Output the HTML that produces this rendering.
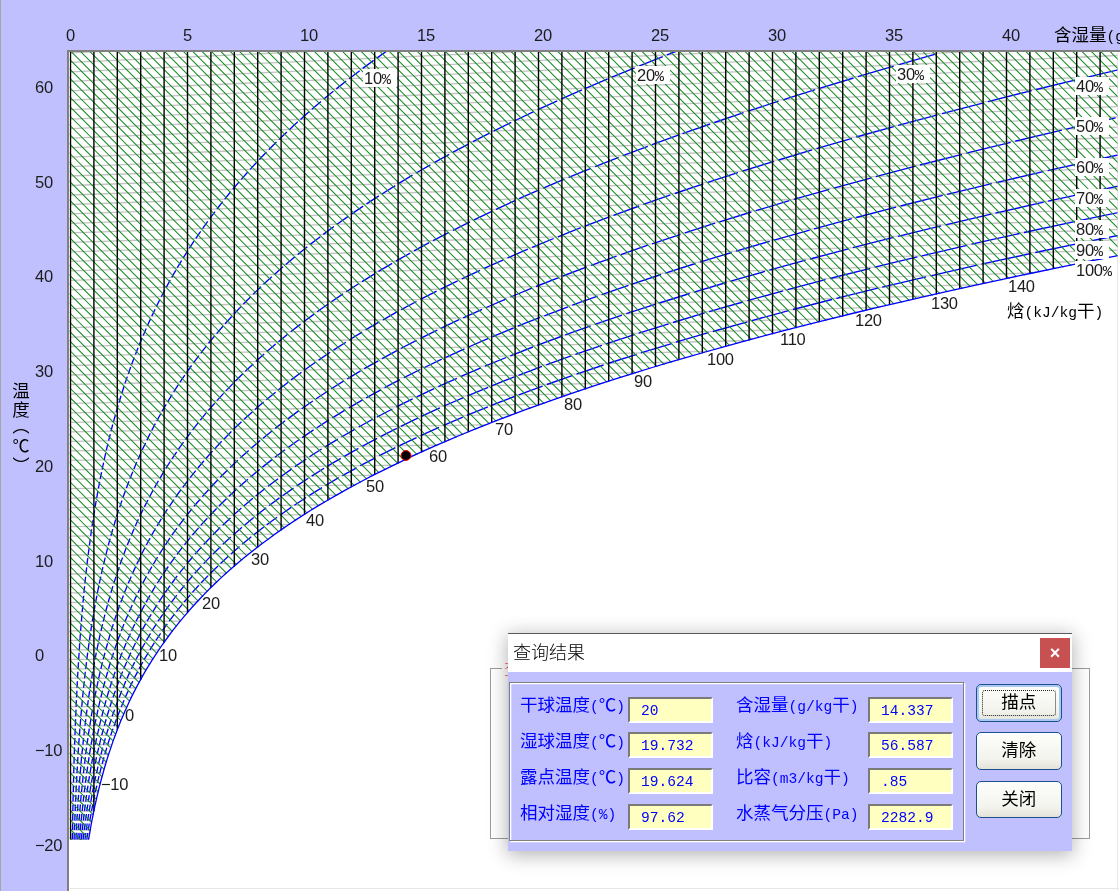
<!DOCTYPE html>
<html lang="zh-CN">
<head>
<meta charset="utf-8">
<title>焓湿图 - 查询结果</title>
<style>
*{box-sizing:border-box;margin:0;padding:0}
html,body{width:1120px;height:891px;overflow:hidden}
body{background:#c0c0ff;position:relative;font-family:"Liberation Sans","Noto Sans CJK SC",sans-serif;color:#000}
#edge{position:absolute;left:0;top:0;width:1.1px;height:891px;background:#a6a6a6}
#plot{position:absolute;left:67.2px;top:49.8px;width:1052.8px;height:841.2px;background:#fff;border-left:2.5px solid #808080;border-top:2px solid #808080}
#plotr{position:absolute;left:1117.2px;top:52px;width:1.3px;height:837.5px;background:#e6e6e6}
#plotb{position:absolute;left:70px;top:888.2px;width:1048.5px;height:1.3px;background:#e6e6e6}
.n{position:absolute;font:16.5px/19px "Liberation Sans",sans-serif;white-space:nowrap;letter-spacing:-0.3px;color:#1c1c1c}
.w{background:#fff;padding:0 0 0 1px;line-height:18px;height:18px}
.p{font-family:"Liberation Mono",monospace;font-size:15.5px;letter-spacing:-0.5px}
.c{position:absolute;font:400 17.5px/20px "Liberation Sans","Noto Sans CJK SC",sans-serif;white-space:nowrap}
.l{font-family:"Liberation Mono",monospace;font-size:14.6px}

#gb{position:absolute;left:490px;top:668px;width:600.3px;height:171px;border:1.5px solid #9c9c9c;background:#fff}
#gbt{position:absolute;left:502px;top:659px;font:17.5px/20px "Liberation Serif","Noto Serif CJK SC",serif;color:#f00;background:#fff;padding:0 2px;white-space:nowrap}
#dlg{position:absolute;left:508px;top:633px;width:563.8px;height:217.7px;background:#c0c0ff;box-shadow:0 3px 18px 1px rgba(0,0,0,.3)}
#tb{position:absolute;left:0;top:0;width:563.8px;height:39px;background:#fff;border-top:1px solid #5a5a5a}
#tt{position:absolute;left:5px;top:6.8px;font:300 18px/24px "Liberation Sans","Noto Sans CJK SC",sans-serif;color:#000;white-space:nowrap}
#cx{position:absolute;left:532px;top:4px;width:30px;height:30px;background:#c75050;color:#fff;font:bold 18px/31px "Liberation Sans",sans-serif;text-align:center}
#pn{position:absolute;left:1px;top:48.5px;width:455px;height:159px;border:1.3px solid #808080;box-shadow:inset 1.3px 1.3px 0 #fff,1.3px 1.3px 0 #fff}
.fl{position:absolute;font:17.5px/20px "Liberation Sans","Noto Sans CJK SC",sans-serif;color:#0000ff;white-space:nowrap}
.fl .l{font-family:"Liberation Mono",monospace;font-size:14.6px}
.fv{position:absolute;width:85px;height:26px;background:#ffffc0;border:2px solid;border-color:#7a7a7a #fff #fff #7a7a7a;font:14.6px/24px "Liberation Mono",monospace;color:#0000ff;padding-left:11px;white-space:nowrap}
.bt{position:absolute;left:468px;width:85.5px;height:37.5px;border:1.3px solid #1c4f8c;border-radius:5px;background:linear-gradient(#fdfdfb,#f4f4ee 70%,#e4e3da);font:17.5px/34px "Liberation Sans","Noto Sans CJK SC",sans-serif;color:#000;text-align:center}
.bt.f{box-shadow:inset 0 0 0 2px #a9c8f2}
.bt.f i{position:absolute;left:4.5px;top:4.5px;right:4.5px;bottom:4.5px;border:1.3px dotted #222;border-radius:3px}
body>*{will-change:transform}
</style>
</head>
<body>
<div id="edge"></div>
<div id="plot"></div>
<div id="plotr"></div>
<div id="plotb"></div>
<svg width="1120" height="891" viewBox="0 0 1120 891" style="position:absolute;left:0;top:0">
<defs><clipPath id="reg"><path d="M69.5 840 L88.6 840.3 L89.4 835.5 L90.2 830.8 L91 826.1 L91.9 821.3 L92.9 816.6 L93.8 811.9 L94.8 807.1 L95.9 802.4 L96.9 797.7 L98.1 792.9 L99.2 788.2 L100.4 783.5 L101.7 778.7 L103 774 L104.3 769.2 L105.7 764.5 L107.1 759.8 L108.6 755 L110.2 750.3 L111.8 745.6 L113.4 740.8 L115.2 736.1 L117 731.3 L118.8 726.6 L120.7 721.8 L122.7 717.1 L124.8 712.3 L126.9 707.6 L129.1 702.8 L131.3 698.1 L133.7 693.3 L136.1 688.6 L138.7 683.8 L141.3 679.1 L143.9 674.3 L146.7 669.6 L149.6 664.8 L152.6 660 L155.7 655.3 L158.8 650.5 L162.1 645.7 L165.5 641 L169 636.2 L172.6 631.4 L176.4 626.6 L180.2 621.8 L184.2 617 L188.3 612.3 L192.5 607.5 L196.9 602.7 L201.4 597.9 L206.1 593.1 L210.9 588.2 L215.9 583.4 L221 578.6 L226.3 573.8 L231.7 569 L237.3 564.1 L243.1 559.3 L249.1 554.4 L255.2 549.6 L261.5 544.7 L268.1 539.9 L274.8 535 L281.7 530.1 L288.9 525.2 L296.2 520.3 L303.8 515.4 L311.6 510.5 L319.7 505.6 L328 500.7 L336.5 495.8 L345.3 490.8 L354.3 485.9 L363.6 480.9 L373.2 475.9 L383.1 471 L393.2 466 L403.6 461 L414.4 455.9 L425.5 450.9 L436.8 445.9 L448.5 440.8 L460.6 435.7 L473 430.6 L485.7 425.5 L498.8 420.4 L512.3 415.3 L526.2 410.1 L540.4 405 L555.1 399.8 L570.2 394.6 L585.7 389.4 L601.6 384.1 L618 378.8 L634.9 373.6 L652.2 368.2 L670 362.9 L688.3 357.6 L707.1 352.2 L726.4 346.8 L746.3 341.3 L766.7 335.9 L787.7 330.4 L809.3 324.9 L831.5 319.3 L854.2 313.7 L877.7 308.1 L901.7 302.5 L926.4 296.8 L951.9 291.1 L978 285.3 L1004.8 279.5 L1032.4 273.7 L1060.7 267.8 L1089.8 261.9 L1119.7 255.9 L1150.4 249.9 L1157.5 52 L1117.5 52 L69.5 52 Z"/></clipPath><clipPath id="box"><rect x="69.5" y="52" width="1048" height="788.3"/></clipPath></defs>
<g clip-path="url(#box)">
<g clip-path="url(#reg)" fill="none">
<path d="M70.5 839.3 L1117.5 854.7 M70.5 829.8 L1117.5 844.5 M70.5 820.3 L1117.5 834.2 M70.5 810.9 L1117.5 824 M70.5 801.4 L1117.5 813.7 M70.5 791.9 L1117.5 803.5 M70.5 782.4 L1117.5 793.3 M70.5 773 L1117.5 783 M70.5 763.5 L1117.5 772.8 M70.5 754 L1117.5 762.5 M70.5 744.5 L1117.5 752.3 M70.5 735.1 L1117.5 742 M70.5 725.6 L1117.5 731.8 M70.5 716.1 L1117.5 721.5 M70.5 706.6 L1117.5 711.3 M70.5 697.2 L1117.5 701 M70.5 687.7 L1117.5 690.8 M70.5 678.2 L1117.5 680.5 M70.5 668.8 L1117.5 670.3 M70.5 659.3 L1117.5 660 M70.5 649.8 L1117.5 649.8 M70.5 640.3 L1117.5 639.6 M70.5 630.8 L1117.5 629.3 M70.5 621.4 L1117.5 619.1 M70.5 611.9 L1117.5 608.8 M70.5 602.4 L1117.5 598.6 M70.5 592.9 L1117.5 588.3 M70.5 583.5 L1117.5 578.1 M70.5 574 L1117.5 567.8 M70.5 564.5 L1117.5 557.6 M70.5 555 L1117.5 547.3 M70.5 545.6 L1117.5 537.1 M70.5 536.1 L1117.5 526.8 M70.5 526.6 L1117.5 516.6 M70.5 517.1 L1117.5 506.3 M70.5 507.7 L1117.5 496.1 M70.5 498.2 L1117.5 485.9 M70.5 488.7 L1117.5 475.6 M70.5 479.2 L1117.5 465.4 M70.5 469.8 L1117.5 455.1 M70.5 460.3 L1117.5 444.9 M70.5 450.8 L1117.5 434.6 M70.5 441.3 L1117.5 424.4 M70.5 431.9 L1117.5 414.1 M70.5 422.4 L1117.5 403.9 M70.5 412.9 L1117.5 393.6 M70.5 403.4 L1117.5 383.4 M70.5 394 L1117.5 373.1 M70.5 384.5 L1117.5 362.9 M70.5 375 L1117.5 352.6 M70.5 365.5 L1117.5 342.4 M70.5 356.1 L1117.5 332.2 M70.5 346.6 L1117.5 321.9 M70.5 337.1 L1117.5 311.7 M70.5 327.6 L1117.5 301.4 M70.5 318.2 L1117.5 291.2 M70.5 308.7 L1117.5 280.9 M70.5 299.2 L1117.5 270.7 M70.5 289.8 L1117.5 260.4 M70.5 280.3 L1117.5 250.2 M70.5 270.8 L1117.5 239.9 M70.5 261.3 L1117.5 229.7 M70.5 251.9 L1117.5 219.4 M70.5 242.4 L1117.5 209.2 M70.5 232.9 L1117.5 199 M70.5 223.4 L1117.5 188.7 M70.5 213.9 L1117.5 178.5 M70.5 204.5 L1117.5 168.2 M70.5 195 L1117.5 158 M70.5 185.5 L1117.5 147.7 M70.5 176 L1117.5 137.5 M70.5 166.6 L1117.5 127.2 M70.5 157.1 L1117.5 117 M70.5 147.6 L1117.5 106.7 M70.5 138.1 L1117.5 96.5 M70.5 128.7 L1117.5 86.2 M70.5 119.2 L1117.5 76 M70.5 109.7 L1117.5 65.7 M70.5 100.2 L1117.5 55.5 M70.5 90.8 L1117.5 45.3 M70.5 81.3 L1117.5 35 M70.5 71.8 L1117.5 24.8 M70.5 62.4 L1117.5 14.5 M70.5 52.9 L1117.5 4.3 M70.5 43.4 L1117.5 -6 M70.5 33.9 L1117.5 -16.2" stroke="#c2c2c2" stroke-width="1.3"/>
<path d="M72.3 839.3 L72.4 832.8 M72.5 829.9 L72.6 823.3 M72.6 820.4 L72.8 813.8 M72.8 810.9 L73 804.4 M73 801.4 L73.2 794.9 M73.3 792 L73.4 785.4 M73.5 782.5 L73.7 775.9 M73.7 773 L73.9 766.5 M74 763.5 L74.2 757 M74.3 754.1 L74.5 747.5 M74.6 744.6 L74.9 738 M75 735.1 L75.2 728.6 M75.3 725.6 L75.6 719.1 M75.7 716.2 L76 709.6 M76.1 706.7 L76.4 700.1 M76.6 697.2 L76.9 690.7 M77 687.7 L77.4 681.2 M77.5 678.2 L77.9 671.7 M78.1 668.8 L78.5 662.2 M78.7 659.3 L79.1 652.7 M79.3 649.8 L79.7 643.3 M79.9 640.3 L80.4 633.8 M80.6 630.8 L81.2 624.3 M81.4 621.4 L81.9 614.8 M82.2 611.9 L82.8 605.3 M83 602.4 L83.7 595.8 M83.9 592.9 L84.6 586.3 M84.9 583.4 L85.6 576.8 M85.9 573.9 L86.7 567.3 M87 564.4 L87.8 557.8 M88.2 554.9 L89 548.3 M89.4 545.4 L90.3 538.8 M90.7 535.9 L91.6 529.3 M92 526.4 L93.1 519.8 M93.5 516.9 L94.6 510.3 M95 507.4 L96.2 500.8 M96.7 497.9 L97.9 491.3 M98.4 488.4 L99.7 481.8 M100.2 478.9 L101.6 472.2 M102.1 469.3 L103.6 462.7 M104.2 459.8 L105.7 453.2 M106.3 450.3 L107.9 443.6 M108.6 440.7 L110.3 434.1 M111 431.2 L112.7 424.5 M113.5 421.6 L115.4 415 M116.2 412.1 L118.1 405.4 M119 402.5 L121 395.8 M121.9 393 L124.1 386.2 M125 383.4 L127.3 376.6 M128.3 373.8 L130.7 367 M131.7 364.2 L134.3 357.4 M135.4 354.6 L138.1 347.8 M139.2 345 L142 338.2 M143.2 335.4 L146.2 328.5 M147.4 325.7 L150.5 318.9 M151.8 316.1 L155.1 309.2 M156.4 306.4 L159.9 299.5 M161.3 296.7 L164.9 289.8 M166.4 287.1 L170.2 280.1 M171.7 277.4 L175.8 270.4 M177.3 267.7 L181.6 260.6 M183.2 257.9 L187.7 250.9 M189.4 248.2 L194 241.1 M195.8 238.4 L200.7 231.3 M202.6 228.6 L207.7 221.4 M209.6 218.8 L215 211.6 M217 209 L222.7 201.7 M224.7 199.1 L230.7 191.8 M232.8 189.3 L239.1 181.9 M241.3 179.4 L247.8 172 M250.1 169.4 L257 162 M259.3 159.5 L266.5 152 M268.9 149.5 L276.5 142 M279 139.5 L286.9 131.9 M289.5 129.4 L297.8 121.8 M300.5 119.4 L309.2 111.6 M311.9 109.2 L321 101.5 M323.8 99.1 L333.4 91.3 M336.3 88.9 L346.2 81 M349.2 78.7 L359.7 70.7 M362.7 68.4 L373.7 60.4 M376.8 58.1 L388.3 50 M74.1 839.4 L74.3 832.8 M74.4 829.9 L74.7 823.3 M74.8 820.4 L75 813.9 M75.2 810.9 L75.4 804.4 M75.6 801.5 L75.9 794.9 M76 792 L76.3 785.4 M76.5 782.5 L76.8 776 M77 773 L77.4 766.5 M77.5 763.6 L77.9 757 M78.1 754.1 L78.5 747.5 M78.7 744.6 L79.2 738.1 M79.4 735.1 L79.9 728.6 M80.1 725.7 L80.7 719.1 M80.9 716.2 L81.5 709.6 M81.7 706.7 L82.4 700.1 M82.6 697.2 L83.3 690.7 M83.6 687.7 L84.3 681.2 M84.6 678.3 L85.3 671.7 M85.7 668.8 L86.5 662.2 M86.8 659.3 L87.7 652.7 M88.1 649.8 L89 643.2 M89.4 640.3 L90.4 633.7 M90.8 630.8 L91.8 624.2 M92.3 621.3 L93.4 614.7 M93.9 611.8 L95.1 605.2 M95.6 602.3 L96.9 595.7 M97.4 592.8 L98.8 586.2 M99.3 583.3 L100.8 576.7 M101.4 573.8 L102.9 567.2 M103.6 564.3 L105.2 557.7 M105.9 554.8 L107.6 548.2 M108.3 545.3 L110.1 538.6 M110.9 535.7 L112.8 529.1 M113.7 526.2 L115.7 519.5 M116.6 516.7 L118.7 510 M119.7 507.1 L122 500.4 M122.9 497.6 L125.4 490.9 M126.4 488 L129 481.3 M130 478.5 L132.8 471.7 M133.9 468.9 L136.8 462.1 M138 459.3 L141.1 452.5 M142.3 449.7 L145.6 442.9 M146.9 440.1 L150.3 433.3 M151.7 430.5 L155.3 423.6 M156.8 420.9 L160.6 414 M162.1 411.2 L166.2 404.3 M167.8 401.6 L172.1 394.6 M173.7 391.9 L178.2 384.9 M180 382.2 L184.8 375.2 M186.6 372.5 L191.6 365.5 M193.5 362.8 L198.9 355.7 M200.8 353.1 L206.5 345.9 M208.5 343.3 L214.5 336.1 M216.6 333.6 L222.9 326.3 M225.1 323.8 L231.7 316.5 M234 314 L241 306.6 M243.4 304.1 L250.8 296.7 M253.2 294.2 L261 286.8 M263.5 284.3 L271.8 276.8 M274.4 274.4 L283 266.8 M285.8 264.5 L294.9 256.8 M297.7 254.5 L307.3 246.8 M310.2 244.4 L320.3 236.7 M323.3 234.4 L333.9 226.5 M337 224.3 L348.2 216.4 M351.4 214.1 L363.2 206.1 M366.5 203.9 L378.9 195.9 M382.3 193.7 L395.3 185.6 M398.8 183.4 L412.5 175.2 M416.1 173 L430.4 164.8 M434.2 162.7 L449.2 154.3 M453.1 152.2 L468.9 143.8 M472.9 141.7 L489.6 133.1 M493.6 131.1 L511.2 122.4 M515.2 120.5 L533.7 111.7 M537.8 109.7 L557.3 100.8 M561.4 98.9 L582 89.9 M586.1 88.1 L607.7 78.9 M611.9 77.1 L634.7 67.8 M638.8 66.1 L662.8 56.6 M666.9 54.9 L692.1 45.3 M75.9 839.4 L76.3 832.8 M76.4 829.9 L76.8 823.4 M76.9 820.4 L77.3 813.9 M77.5 811 L77.9 804.4 M78.1 801.5 L78.6 794.9 M78.8 792 L79.2 785.5 M79.5 782.5 L80 776 M80.2 773.1 L80.8 766.5 M81 763.6 L81.6 757 M81.9 754.1 L82.6 747.6 M82.9 744.6 L83.6 738.1 M83.9 735.2 L84.6 728.6 M85 725.7 L85.8 719.1 M86.1 716.2 L87 709.6 M87.4 706.7 L88.3 700.2 M88.7 697.2 L89.7 690.7 M90.1 687.8 L91.2 681.2 M91.7 678.3 L92.8 671.7 M93.3 668.8 L94.5 662.2 M95 659.3 L96.3 652.7 M96.9 649.8 L98.3 643.2 M98.9 640.3 L100.3 633.7 M101 630.8 L102.6 624.2 M103.2 621.3 L104.9 614.7 M105.6 611.8 L107.4 605.2 M108.2 602.3 L110.1 595.6 M110.9 592.8 L112.9 586.1 M113.8 583.3 L116 576.6 M116.9 573.7 L119.2 567 M120.1 564.2 L122.6 557.5 M123.6 554.7 L126.2 547.9 M127.3 545.1 L130 538.4 M131.2 535.6 L134.1 528.8 M135.3 526 L138.4 519.2 M139.7 516.4 L143 509.6 M144.4 506.9 L147.9 500 M149.3 497.3 L153 490.4 M154.5 487.7 L158.4 480.8 M160 478.1 L164.2 471.1 M165.8 468.4 L170.3 461.5 M172 458.8 L176.7 451.8 M178.5 449.2 L183.5 442.1 M185.4 439.5 L190.7 432.4 M192.6 429.8 L198.3 422.7 M200.3 420.1 L206.2 412.9 M208.4 410.4 L214.7 403.2 M216.9 400.6 L223.6 393.4 M225.9 390.9 L232.9 383.6 M235.3 381.1 L242.8 373.7 M245.3 371.3 L253.2 363.9 M255.8 361.5 L264.2 354 M266.9 351.6 L275.7 344 M278.5 341.7 L287.9 334.1 M290.7 331.8 L300.6 324.1 M303.6 321.8 L314.1 314.1 M317.1 311.8 L328.2 304 M331.4 301.8 L343 293.9 M346.3 291.7 L358.6 283.8 M362 281.6 L375 273.6 M378.5 271.4 L392.2 263.4 M395.8 261.2 L410.2 253.1 M414 250.9 L429.1 242.7 M433 240.6 L449 232.3 M453 230.3 L470 221.8 M474 219.8 L491.9 211.3 M496 209.3 L515 200.6 M519.1 198.7 L539.1 189.9 M543.2 188.1 L564.4 179.1 M568.6 177.4 L590.9 168.3 M595.1 166.6 L618.7 157.3 M622.9 155.7 L647.8 146.3 M652 144.7 L678.3 135.2 M682.5 133.6 L710.2 124 M714.4 122.5 L743.6 112.6 M747.9 111.2 L778.6 101.2 M782.9 99.8 L815.2 89.6 M819.5 88.3 L853.5 78 M857.9 76.7 L893.7 66.1 M898 64.9 L935.6 54.2 M77.7 839.4 L78.2 832.9 M78.4 829.9 L78.9 823.4 M79.1 820.5 L79.6 813.9 M79.8 811 L80.4 804.4 M80.6 801.5 L81.2 795 M81.5 792 L82.2 785.5 M82.5 782.6 L83.2 776 M83.5 773.1 L84.2 766.5 M84.6 763.6 L85.4 757.1 M85.7 754.1 L86.6 747.6 M87 744.7 L87.9 738.1 M88.3 735.2 L89.3 728.6 M89.8 725.7 L90.9 719.1 M91.3 716.2 L92.5 709.7 M93 706.7 L94.2 700.2 M94.8 697.3 L96.1 690.7 M96.7 687.8 L98.1 681.2 M98.7 678.3 L100.2 671.7 M100.9 668.8 L102.5 662.2 M103.2 659.3 L105 652.7 M105.7 649.8 L107.6 643.2 M108.4 640.3 L110.3 633.7 M111.2 630.8 L113.3 624.1 M114.2 621.3 L116.4 614.6 M117.4 611.8 L119.8 605.1 M120.8 602.2 L123.4 595.5 M124.4 592.7 L127.2 586 M128.3 583.2 L131.2 576.4 M132.4 573.6 L135.5 566.9 M136.8 564.1 L140.1 557.3 M141.4 554.5 L144.9 547.7 M146.3 545 L150.1 538.1 M151.5 535.4 L155.5 528.5 M157.1 525.8 L161.3 518.9 M162.9 516.2 L167.4 509.2 M169.2 506.6 L173.9 499.6 M175.7 497 L180.8 489.9 M182.7 487.3 L188.1 480.3 M190.1 477.7 L195.8 470.6 M197.9 468 L204 460.8 M206.1 458.3 L212.6 451.1 M214.9 448.6 L221.7 441.3 M224.1 438.9 L231.4 431.6 M233.8 429.1 L241.5 421.7 M244.1 419.3 L252.3 411.9 M254.9 409.5 L263.6 402.1 M266.3 399.7 L275.6 392.2 M278.4 389.8 L288.2 382.2 M291.1 379.9 L301.5 372.3 M304.5 370 L315.5 362.3 M318.6 360.1 L330.2 352.3 M333.5 350.1 L345.8 342.2 M349.1 340 L362.1 332.1 M365.6 329.9 L379.3 321.9 M383 319.8 L397.4 311.7 M401.2 309.6 L416.5 301.5 M420.4 299.4 L436.6 291.2 M440.6 289.1 L457.7 280.8 M461.8 278.8 L480 270.3 M484.1 268.4 L503.4 259.8 M507.5 257.9 L527.9 249.2 M532.1 247.4 L553.7 238.5 M557.9 236.8 L580.8 227.7 M585 226.1 L609.3 216.9 M613.5 215.3 L639.2 206 M643.4 204.4 L670.5 194.9 M674.8 193.5 L703.4 183.8 M707.7 182.4 L737.9 172.6 M742.2 171.2 L774.2 161.3 M778.5 160 L812.2 149.9 M816.5 148.6 L852 138.3 M856.3 137 L893.8 126.6 M898.1 125.4 L937.6 114.8 M942 113.6 L983.6 102.8 M987.9 101.6 L1031.7 90.6 M1036.1 89.5 L1082.2 78.3 M1086.6 77.3 L1135.2 65.8 M79.5 839.4 L80.1 832.9 M80.3 830 L80.9 823.4 M81.2 820.5 L81.9 813.9 M82.2 811 L82.9 804.5 M83.2 801.5 L83.9 795 M84.3 792.1 L85.1 785.5 M85.4 782.6 L86.3 776.1 M86.7 773.1 L87.7 766.6 M88.1 763.7 L89.1 757.1 M89.5 754.2 L90.6 747.6 M91.1 744.7 L92.3 738.1 M92.8 735.2 L94.1 728.6 M94.6 725.7 L96 719.2 M96.6 716.3 L98 709.7 M98.6 706.8 L100.2 700.2 M100.9 697.3 L102.5 690.7 M103.2 687.8 L105 681.2 M105.8 678.3 L107.7 671.7 M108.5 668.8 L110.5 662.2 M111.4 659.3 L113.6 652.7 M114.5 649.8 L116.9 643.1 M117.8 640.3 L120.3 633.6 M121.4 630.8 L124 624.1 M125.1 621.3 L128 614.5 M129.2 611.7 L132.2 605 M133.4 602.2 L136.7 595.4 M138 592.7 L141.4 585.9 M142.8 583.1 L146.5 576.3 M148 573.5 L151.9 566.7 M153.4 564 L157.6 557.1 M159.2 554.4 L163.7 547.5 M165.4 544.8 L170.1 537.8 M171.9 535.2 L177 528.2 M178.9 525.6 L184.3 518.5 M186.2 516 L192 508.9 M194 506.3 L200.1 499.2 M202.3 496.6 L208.8 489.5 M211 487 L217.9 479.7 M220.3 477.3 L227.6 470 M230.1 467.5 L237.9 460.2 M240.4 457.8 L248.7 450.4 M251.4 448 L260.2 440.6 M263 438.2 L272.3 430.7 M275.2 428.4 L285.1 420.8 M288.1 418.6 L298.6 410.9 M301.7 408.7 L312.9 401 M316.1 398.7 L328 391 M331.3 388.8 L343.9 380.9 M347.3 378.8 L360.6 370.9 M364.2 368.7 L378.3 360.8 M382 358.7 L396.9 350.6 M400.7 348.5 L416.5 340.4 M420.5 338.3 L437.3 330.1 M441.3 328.1 L459.1 319.7 M463.2 317.8 L482.1 309.3 M486.2 307.5 L506.4 298.8 M510.5 297 L531.9 288.2 M536 286.5 L558.7 277.6 M562.9 276 L586.9 266.9 M591.1 265.3 L616.6 256.1 M620.8 254.6 L647.8 245.2 M652.1 243.8 L680.6 234.3 M684.9 232.8 L715.1 223.2 M719.4 221.8 L751.4 212 M755.7 210.7 L789.4 200.7 M793.7 199.4 L829.4 189.3 M833.8 188.1 L871.5 177.8 M875.8 176.6 L915.6 166.1 M920 165 L962 154.3 M966.3 153.2 L1010.7 142.3 M1015.1 141.2 L1061.8 130.2 M1066.2 129.2 L1115.6 117.9 M81.3 839.5 L82 832.9 M82.3 830 L83 823.4 M83.4 820.5 L84.1 814 M84.5 811.1 L85.3 804.5 M85.7 801.6 L86.6 795 M87 792.1 L88 785.6 M88.4 782.6 L89.5 776.1 M90 773.2 L91.1 766.6 M91.6 763.7 L92.8 757.1 M93.4 754.2 L94.7 747.6 M95.2 744.7 L96.6 738.2 M97.3 735.3 L98.8 728.7 M99.4 725.8 L101.1 719.2 M101.8 716.3 L103.5 709.7 M104.3 706.8 L106.1 700.2 M106.9 697.3 L108.9 690.7 M109.8 687.8 L112 681.2 M112.9 678.3 L115.2 671.7 M116.1 668.8 L118.6 662.1 M119.6 659.3 L122.3 652.6 M123.4 649.8 L126.2 643.1 M127.4 640.3 L130.4 633.5 M131.6 630.8 L134.8 624 M136.1 621.2 L139.6 614.4 M141 611.7 L144.6 604.9 M146.1 602.1 L150 595.3 M151.6 592.6 L155.7 585.7 M157.4 583 L161.8 576.1 M163.6 573.5 L168.3 566.5 M170.1 563.9 L175.2 556.9 M177.1 554.3 L182.5 547.2 M184.5 544.7 L190.3 537.6 M192.4 535 L198.6 527.9 M200.7 525.4 L207.3 518.2 M209.6 515.7 L216.6 508.5 M219 506 L226.4 498.8 M228.9 496.3 L236.9 489 M239.5 486.6 L247.9 479.2 M250.6 476.9 L259.6 469.4 M262.4 467.1 L272 459.6 M274.9 457.3 L285.1 449.7 M288.1 447.5 L298.9 439.8 M302.1 437.6 L313.6 429.9 M316.8 427.7 L329 419.9 M332.4 417.8 L345.4 409.9 M348.9 407.8 L362.6 399.9 M366.2 397.8 L380.8 389.8 M384.6 387.7 L400 379.7 M403.9 377.6 L420.3 369.5 M424.4 367.5 L441.8 359.2 M445.9 357.3 L464.5 348.8 M468.6 347 L488.4 338.4 M492.5 336.6 L513.6 328 M517.7 326.2 L540.1 317.4 M544.3 315.8 L568.1 306.8 M572.3 305.2 L597.5 296.1 M601.7 294.6 L628.5 285.4 M632.8 283.9 L661.1 274.5 M665.4 273.1 L695.5 263.5 M699.8 262.2 L731.6 252.5 M736 251.2 L769.7 241.3 M774 240.1 L809.7 230.1 M814.1 228.8 L851.8 218.6 M856.2 217.5 L896.1 207.1 M900.5 206 L942.7 195.4 M947.1 194.4 L991.8 183.6 M996.1 182.6 L1043.3 171.6 M1047.7 170.6 L1097.5 159.5 M1101.9 158.5 L1154.5 147.2 M83.1 839.5 L83.9 832.9 M84.3 830 L85.1 823.5 M85.5 820.5 L86.4 814 M86.8 811.1 L87.8 804.5 M88.2 801.6 L89.3 795.1 M89.8 792.1 L90.9 785.6 M91.4 782.7 L92.7 776.1 M93.2 773.2 L94.5 766.6 M95.1 763.7 L96.5 757.1 M97.2 754.2 L98.7 747.7 M99.4 744.8 L101 738.2 M101.7 735.3 L103.5 728.7 M104.3 725.8 L106.2 719.2 M107 716.3 L109 709.7 M109.9 706.8 L112.1 700.2 M113 697.3 L115.4 690.7 M116.4 687.8 L118.9 681.2 M120 678.3 L122.6 671.6 M123.8 668.8 L126.7 662.1 M127.9 659.3 L130.9 652.6 M132.2 649.8 L135.5 643 M136.9 640.3 L140.4 633.5 M141.8 630.7 L145.6 623.9 M147.1 621.2 L151.2 614.4 M152.8 611.7 L157.1 604.8 M158.8 602.1 L163.4 595.2 M165.2 592.5 L170.1 585.6 M172 583 L177.2 575.9 M179.2 573.4 L184.8 566.3 M186.9 563.8 L192.9 556.7 M195 554.1 L201.5 547 M203.7 544.5 L210.6 537.3 M212.9 534.8 L220.2 527.6 M222.7 525.2 L230.5 517.9 M233 515.5 L241.4 508.1 M244 505.8 L252.9 498.3 M255.7 496 L265.1 488.5 M268 486.3 L278.1 478.7 M281.1 476.5 L291.8 468.9 M294.9 466.6 L306.3 459 M309.5 456.8 L321.6 449 M325 446.9 L337.9 439.1 M341.4 437 L355.1 429.1 M358.7 427 L373.2 419 M377 417 L392.4 409 M396.3 406.9 L412.7 398.8 M416.7 396.8 L434.2 388.6 M438.3 386.7 L456.9 378.3 M461 376.4 L480.9 367.9 M485 366.2 L506.2 357.5 M510.3 355.8 L532.9 347 M537.1 345.4 L561 336.5 M565.2 334.9 L590.7 325.9 M594.9 324.4 L622 315.2 M626.3 313.7 L655 304.4 M659.3 303 L689.8 293.5 M694.1 292.2 L726.4 282.5 M730.7 281.2 L765 271.4 M769.3 270.2 L805.6 260.2 M810 259 L848.5 248.9 M852.8 247.7 L893.6 237.4 M897.9 236.3 L941.1 225.8 M945.4 224.8 L991.1 214.1 M995.5 213.1 L1043.7 202.2 M1048.1 201.2 L1099.2 190.1 M1103.6 189.2 L1157.6 177.9 M85 839.5 L85.8 833 M86.2 830 L87.2 823.5 M87.6 820.6 L88.7 814 M89.2 811.1 L90.3 804.5 M90.8 801.6 L92 795.1 M92.5 792.2 L93.8 785.6 M94.4 782.7 L95.8 776.1 M96.5 773.2 L98 766.6 M98.6 763.7 L100.3 757.2 M101 754.3 L102.7 747.7 M103.5 744.8 L105.4 738.2 M106.2 735.3 L108.2 728.7 M109.1 725.8 L111.3 719.2 M112.2 716.3 L114.6 709.7 M115.6 706.8 L118.1 700.2 M119.1 697.4 L121.8 690.7 M123 687.9 L125.8 681.1 M127 678.4 L130.1 671.6 M131.4 668.8 L134.7 662.1 M136.1 659.3 L139.6 652.5 M141.1 649.8 L144.9 643 M146.4 640.3 L150.5 633.4 M152.1 630.7 L156.4 623.8 M158.1 621.2 L162.8 614.3 M164.6 611.6 L169.6 604.7 M171.5 602.1 L176.8 595.1 M178.8 592.5 L184.5 585.4 M186.6 582.9 L192.7 575.8 M194.8 573.3 L201.4 566.1 M203.6 563.6 L210.6 556.4 M213 554 L220.5 546.8 M222.9 544.3 L230.9 537 M233.5 534.7 L242 527.3 M244.7 525 L253.7 517.5 M256.6 515.2 L266.2 507.8 M269.2 505.5 L279.5 497.9 M282.5 495.7 L293.5 488.1 M296.7 485.9 L308.3 478.2 M311.7 476.1 L324.1 468.3 M327.5 466.2 L340.8 458.4 M344.3 456.3 L358.4 448.4 M362.1 446.3 L377.1 438.4 M380.9 436.3 L396.8 428.3 M400.8 426.3 L417.8 418.1 M421.8 416.2 L439.9 407.9 M444 406 L463.4 397.6 M467.5 395.8 L488.2 387.3 M492.3 385.6 L514.3 376.9 M518.5 375.3 L542 366.4 M546.2 364.9 L571.1 355.9 M575.4 354.4 L601.9 345.3 M606.2 343.8 L634.4 334.6 M638.7 333.2 L668.7 323.8 M673 322.5 L704.8 312.9 M709.1 311.6 L743 302 M747.3 300.7 L783.2 290.9 M787.5 289.7 L825.6 279.7 M829.9 278.5 L870.3 268.3 M874.7 267.2 L917.4 256.9 M921.8 255.8 L967.1 245.3 M971.5 244.2 L1019.5 233.5 M1023.9 232.5 L1074.7 221.6 M1079.1 220.6 L1132.9 209.5 M86.8 839.5 L87.8 833 M88.2 830.1 L89.3 823.5 M89.8 820.6 L91 814 M91.5 811.1 L92.8 804.6 M93.3 801.7 L94.7 795.1 M95.3 792.2 L96.8 785.6 M97.4 782.7 L99 776.1 M99.7 773.3 L101.4 766.7 M102.2 763.8 L104 757.2 M104.8 754.3 L106.8 747.7 M107.6 744.8 L109.8 738.2 M110.7 735.3 L113 728.7 M114 725.9 L116.4 719.2 M117.5 716.4 L120.1 709.7 M121.2 706.9 L124.1 700.2 M125.2 697.4 L128.3 690.7 M129.5 687.9 L132.8 681.1 M134.1 678.4 L137.7 671.6 M139.1 668.9 L142.8 662 M144.3 659.3 L148.4 652.5 M149.9 649.8 L154.3 642.9 M155.9 640.3 L160.6 633.4 M162.3 630.7 L167.3 623.8 M169.2 621.2 L174.5 614.2 M176.4 611.6 L182.1 604.6 M184.2 602 L190.3 594.9 M192.4 592.4 L198.9 585.3 M201.2 582.8 L208.2 575.6 M210.5 573.2 L218 565.9 M220.5 563.5 L228.4 556.2 M231 553.9 L239.5 546.5 M242.2 544.2 L251.3 536.8 M254.1 534.5 L263.8 527 M266.7 524.7 L277.1 517.2 M280.2 515 L291.2 507.4 M294.4 505.2 L306.1 497.5 M309.4 495.4 L322 487.7 M325.4 485.5 L338.8 477.7 M342.4 475.6 L356.6 467.8 M360.3 465.7 L375.4 457.8 M379.3 455.7 L395.4 447.7 M399.4 445.7 L416.6 437.6 M420.6 435.7 L439 427.4 M443.1 425.6 L462.8 417.2 M466.9 415.4 L487.9 406.9 M492.1 405.2 L514.5 396.5 M518.7 394.9 L542.6 386.1 M546.8 384.5 L572.2 375.6 M576.5 374.1 L603.6 365 M607.8 363.5 L636.7 354.3 M640.9 352.9 L671.6 343.6 M675.9 342.2 L708.5 332.7 M712.8 331.5 L747.5 321.8 M751.8 320.6 L788.6 310.7 M792.9 309.5 L832 299.5 M836.3 298.4 L877.8 288.2 M882.2 287.2 L926.1 276.8 M930.5 275.8 L977.1 265.2 M981.5 264.2 L1030.9 253.5 M1035.3 252.5 L1087.6 241.6 M1092 240.7 L1147.5 229.5" stroke="#0000ff" stroke-width="1.35" fill="none"/>
<path d="M68.5 836.9 L1119.5 1890.3 M68.5 827.5 L1119.5 1880.9 M68.5 818.2 L1119.5 1871.5 M68.5 808.8 L1119.5 1862.2 M68.5 799.4 L1119.5 1852.8 M68.5 790 L1119.5 1843.4 M68.5 780.6 L1119.5 1834 M68.5 771.3 L1119.5 1824.6 M68.5 761.9 L1119.5 1815.2 M68.5 752.5 L1119.5 1805.9 M68.5 743.1 L1119.5 1796.5 M68.5 733.7 L1119.5 1787.1 M68.5 724.3 L1119.5 1777.7 M68.5 715 L1119.5 1768.3 M68.5 705.6 L1119.5 1759 M68.5 696.2 L1119.5 1749.6 M68.5 686.8 L1119.5 1740.2 M68.5 677.4 L1119.5 1730.8 M68.5 668.1 L1119.5 1721.4 M68.5 658.7 L1119.5 1712.1 M68.5 649.3 L1119.5 1702.7 M68.5 639.9 L1119.5 1693.3 M68.5 630.5 L1119.5 1683.9 M68.5 621.2 L1119.5 1674.5 M68.5 611.8 L1119.5 1665.1 M68.5 602.4 L1119.5 1655.8 M68.5 593 L1119.5 1646.4 M68.5 583.6 L1119.5 1637 M68.5 574.2 L1119.5 1627.6 M68.5 564.9 L1119.5 1618.2 M68.5 555.5 L1119.5 1608.9 M68.5 546.1 L1119.5 1599.5 M68.5 536.7 L1119.5 1590.1 M68.5 527.3 L1119.5 1580.7 M68.5 518 L1119.5 1571.3 M68.5 508.6 L1119.5 1562 M68.5 499.2 L1119.5 1552.6 M68.5 489.8 L1119.5 1543.2 M68.5 480.4 L1119.5 1533.8 M68.5 471.1 L1119.5 1524.4 M68.5 461.7 L1119.5 1515.1 M68.5 452.3 L1119.5 1505.7 M68.5 442.9 L1119.5 1496.3 M68.5 433.5 L1119.5 1486.9 M68.5 424.1 L1119.5 1477.5 M68.5 414.8 L1119.5 1468.1 M68.5 405.4 L1119.5 1458.8 M68.5 396 L1119.5 1449.4 M68.5 386.6 L1119.5 1440 M68.5 377.2 L1119.5 1430.6 M68.5 367.9 L1119.5 1421.2 M68.5 358.5 L1119.5 1411.9 M68.5 349.1 L1119.5 1402.5 M68.5 339.7 L1119.5 1393.1 M68.5 330.3 L1119.5 1383.7 M68.5 321 L1119.5 1374.3 M68.5 311.6 L1119.5 1365 M68.5 302.2 L1119.5 1355.6 M68.5 292.8 L1119.5 1346.2 M68.5 283.4 L1119.5 1336.8 M68.5 274 L1119.5 1327.4 M68.5 264.7 L1119.5 1318 M68.5 255.3 L1119.5 1308.7 M68.5 245.9 L1119.5 1299.3 M68.5 236.5 L1119.5 1289.9 M68.5 227.1 L1119.5 1280.5 M68.5 217.8 L1119.5 1271.1 M68.5 208.4 L1119.5 1261.8 M68.5 199 L1119.5 1252.4 M68.5 189.6 L1119.5 1243 M68.5 180.2 L1119.5 1233.6 M68.5 170.9 L1119.5 1224.2 M68.5 161.5 L1119.5 1214.9 M68.5 152.1 L1119.5 1205.5 M68.5 142.7 L1119.5 1196.1 M68.5 133.3 L1119.5 1186.7 M68.5 123.9 L1119.5 1177.3 M68.5 114.6 L1119.5 1167.9 M68.5 105.2 L1119.5 1158.6 M68.5 95.8 L1119.5 1149.2 M68.5 86.4 L1119.5 1139.8 M68.5 77 L1119.5 1130.4 M68.5 67.7 L1119.5 1121 M68.5 58.3 L1119.5 1111.7 M68.5 48.9 L1119.5 1102.3 M68.5 39.5 L1119.5 1092.9 M68.5 30.1 L1119.5 1083.5 M68.5 20.8 L1119.5 1074.1 M68.5 11.4 L1119.5 1064.8 M68.5 2 L1119.5 1055.4 M68.5 -7.4 L1119.5 1046 M68.5 -16.8 L1119.5 1036.6 M68.5 -26.2 L1119.5 1027.2 M68.5 -35.5 L1119.5 1017.8 M68.5 -44.9 L1119.5 1008.5 M68.5 -54.3 L1119.5 999.1 M68.5 -63.7 L1119.5 989.7 M68.5 -73.1 L1119.5 980.3 M68.5 -82.4 L1119.5 970.9 M68.5 -91.8 L1119.5 961.6 M68.5 -101.2 L1119.5 952.2 M68.5 -110.6 L1119.5 942.8 M68.5 -120 L1119.5 933.4 M68.5 -129.3 L1119.5 924 M68.5 -138.7 L1119.5 914.7 M68.5 -148.1 L1119.5 905.3 M68.5 -157.5 L1119.5 895.9 M68.5 -166.9 L1119.5 886.5 M68.5 -176.2 L1119.5 877.1 M68.5 -185.6 L1119.5 867.7 M68.5 -195 L1119.5 858.4 M68.5 -204.4 L1119.5 849 M68.5 -213.8 L1119.5 839.6 M68.5 -223.2 L1119.5 830.2 M68.5 -232.5 L1119.5 820.8 M68.5 -241.9 L1119.5 811.5 M68.5 -251.3 L1119.5 802.1 M68.5 -260.7 L1119.5 792.7 M68.5 -270.1 L1119.5 783.3 M68.5 -279.4 L1119.5 773.9 M68.5 -288.8 L1119.5 764.6 M68.5 -298.2 L1119.5 755.2 M68.5 -307.6 L1119.5 745.8 M68.5 -317 L1119.5 736.4 M68.5 -326.3 L1119.5 727 M68.5 -335.7 L1119.5 717.6 M68.5 -345.1 L1119.5 708.3 M68.5 -354.5 L1119.5 698.9 M68.5 -363.9 L1119.5 689.5 M68.5 -373.3 L1119.5 680.1 M68.5 -382.6 L1119.5 670.7 M68.5 -392 L1119.5 661.4 M68.5 -401.4 L1119.5 652 M68.5 -410.8 L1119.5 642.6 M68.5 -420.2 L1119.5 633.2 M68.5 -429.5 L1119.5 623.8 M68.5 -438.9 L1119.5 614.5 M68.5 -448.3 L1119.5 605.1 M68.5 -457.7 L1119.5 595.7 M68.5 -467.1 L1119.5 586.3 M68.5 -476.4 L1119.5 576.9 M68.5 -485.8 L1119.5 567.6 M68.5 -495.2 L1119.5 558.2 M68.5 -504.6 L1119.5 548.8 M68.5 -514 L1119.5 539.4 M68.5 -523.4 L1119.5 530 M68.5 -532.7 L1119.5 520.6 M68.5 -542.1 L1119.5 511.3 M68.5 -551.5 L1119.5 501.9 M68.5 -560.9 L1119.5 492.5 M68.5 -570.3 L1119.5 483.1 M68.5 -579.6 L1119.5 473.7 M68.5 -589 L1119.5 464.4 M68.5 -598.4 L1119.5 455 M68.5 -607.8 L1119.5 445.6 M68.5 -617.2 L1119.5 436.2 M68.5 -626.5 L1119.5 426.8 M68.5 -635.9 L1119.5 417.5 M68.5 -645.3 L1119.5 408.1 M68.5 -654.7 L1119.5 398.7 M68.5 -664.1 L1119.5 389.3 M68.5 -673.5 L1119.5 379.9 M68.5 -682.8 L1119.5 370.5 M68.5 -692.2 L1119.5 361.2 M68.5 -701.6 L1119.5 351.8 M68.5 -711 L1119.5 342.4 M68.5 -720.4 L1119.5 333 M68.5 -729.7 L1119.5 323.6 M68.5 -739.1 L1119.5 314.3 M68.5 -748.5 L1119.5 304.9 M68.5 -757.9 L1119.5 295.5 M68.5 -767.3 L1119.5 286.1 M68.5 -776.6 L1119.5 276.7 M68.5 -786 L1119.5 267.4 M68.5 -795.4 L1119.5 258 M68.5 -804.8 L1119.5 248.6 M68.5 -814.2 L1119.5 239.2 M68.5 -823.6 L1119.5 229.8 M68.5 -832.9 L1119.5 220.4 M68.5 -842.3 L1119.5 211.1 M68.5 -851.7 L1119.5 201.7 M68.5 -861.1 L1119.5 192.3 M68.5 -870.5 L1119.5 182.9 M68.5 -879.8 L1119.5 173.5 M68.5 -889.2 L1119.5 164.2 M68.5 -898.6 L1119.5 154.8 M68.5 -908 L1119.5 145.4 M68.5 -917.4 L1119.5 136 M68.5 -926.7 L1119.5 126.6 M68.5 -936.1 L1119.5 117.3 M68.5 -945.5 L1119.5 107.9 M68.5 -954.9 L1119.5 98.5 M68.5 -964.3 L1119.5 89.1 M68.5 -973.7 L1119.5 79.7 M68.5 -983 L1119.5 70.3 M68.5 -992.4 L1119.5 61" stroke="#118a1f" stroke-width="1.02"/>
</g>
<path d="M70.5 52 L70.5 839.3 M93.9 52 L93.9 811.3 M117.3 52 L117.3 730.2 M140.7 52 L140.7 679.9 M164.1 52 L164.1 642.7 M187.5 52 L187.5 613 M210.9 52 L210.9 588 M234.3 52 L234.3 566.5 M257.7 52 L257.7 547.5 M281.1 52 L281.1 530.4 M304.5 52 L304.5 514.8 M327.9 52 L327.9 500.5 M351.3 52 L351.3 487.3 M374.7 52 L374.7 475 M398.1 52 L398.1 463.4 M421.5 52 L421.5 452.5 M444.9 52 L444.9 442.2 M468.3 52 L468.3 432.3 M491.7 52 L491.7 423 M515.1 52 L515.1 414 M538.5 52 L538.5 405.5 M561.9 52 L561.9 397.2 M585.3 52 L585.3 389.3 M608.7 52 L608.7 381.6 M632.1 52 L632.1 374.2 M655.5 52 L655.5 367 M678.9 52 L678.9 360.1 M702.3 52 L702.3 353.3 M725.7 52 L725.7 346.8 M749.1 52 L749.1 340.4 M772.5 52 L772.5 334.2 M795.9 52 L795.9 328.1 M819.3 52 L819.3 322.1 M842.7 52 L842.7 316.4 M866.1 52 L866.1 310.7 M889.5 52 L889.5 305.1 M912.9 52 L912.9 299.7 M936.3 52 L936.3 294.4 M959.7 52 L959.7 289.1 M983.1 52 L983.1 284 M1006.5 52 L1006.5 279 M1029.9 52 L1029.9 274 M1053.3 52 L1053.3 269.1 M1076.7 52 L1076.7 264.4 M1100.1 52 L1100.1 259.6" stroke="#000" stroke-width="1.4" fill="none"/>
<path d="M88.6 839.6 L89.4 834.8 L90.2 830.1 L91 825.4 L91.9 820.6 L92.9 815.9 L93.8 811.2 L94.8 806.4 L95.9 801.7 L96.9 797 L98.1 792.2 L99.2 787.5 L100.4 782.8 L101.7 778 L103 773.3 L104.3 768.5 L105.7 763.8 L107.1 759.1 L108.6 754.3 L110.2 749.6 L111.8 744.9 L113.4 740.1 L115.2 735.4 L117 730.6 L118.8 725.9 L120.7 721.1 L122.7 716.4 L124.8 711.6 L126.9 706.9 L129.1 702.1 L131.3 697.4 L133.7 692.6 L136.1 687.9 L138.7 683.1 L141.3 678.4 L143.9 673.6 L146.7 668.9 L149.6 664.1 L152.6 659.3 L155.7 654.6 L158.8 649.8 L162.1 645 L165.5 640.3 L169 635.5 L172.6 630.7 L176.4 625.9 L180.2 621.1 L184.2 616.3 L188.3 611.6 L192.5 606.8 L196.9 602 L201.4 597.2 L206.1 592.4 L210.9 587.5 L215.9 582.7 L221 577.9 L226.3 573.1 L231.7 568.3 L237.3 563.4 L243.1 558.6 L249.1 553.7 L255.2 548.9 L261.5 544 L268.1 539.2 L274.8 534.3 L281.7 529.4 L288.9 524.5 L296.2 519.6 L303.8 514.7 L311.6 509.8 L319.7 504.9 L328 500 L336.5 495.1 L345.3 490.1 L354.3 485.2 L363.6 480.2 L373.2 475.2 L383.1 470.3 L393.2 465.3 L403.6 460.3 L414.4 455.2 L425.5 450.2 L436.8 445.2 L448.5 440.1 L460.6 435 L473 429.9 L485.7 424.8 L498.8 419.7 L512.3 414.6 L526.2 409.4 L540.4 404.3 L555.1 399.1 L570.2 393.9 L585.7 388.7 L601.6 383.4 L618 378.1 L634.9 372.9 L652.2 367.5 L670 362.2 L688.3 356.9 L707.1 351.5 L726.4 346.1 L746.3 340.6 L766.7 335.2 L787.7 329.7 L809.3 324.2 L831.5 318.6 L854.2 313 L877.7 307.4 L901.7 301.8 L926.4 296.1 L951.9 290.4 L978 284.6 L1004.8 278.8 L1032.4 273 L1060.7 267.1 L1089.8 261.2 L1119.7 255.2 L1150.4 249.2" stroke="#0000ff" stroke-width="1.3" fill="none"/>
</g>
<circle cx="406" cy="455.5" r="4.9" fill="#000" stroke="#f00" stroke-width="1"/>
</svg>
<div class="n" style="left:66.2px;top:25.6px;">0</div>
<div class="n" style="left:183.2px;top:25.6px;">5</div>
<div class="n" style="left:300.2px;top:25.6px;">10</div>
<div class="n" style="left:417.2px;top:25.6px;">15</div>
<div class="n" style="left:534.2px;top:25.6px;">20</div>
<div class="n" style="left:651.2px;top:25.6px;">25</div>
<div class="n" style="left:768.2px;top:25.6px;">30</div>
<div class="n" style="left:885.2px;top:25.6px;">35</div>
<div class="n" style="left:1002.2px;top:25.6px;">40</div>
<div class="n" style="left:34.5px;top:77.9px;">60</div>
<div class="n" style="left:34.5px;top:172.6px;">50</div>
<div class="n" style="left:34.5px;top:267.4px;">40</div>
<div class="n" style="left:34.5px;top:362.1px;">30</div>
<div class="n" style="left:34.5px;top:456.9px;">20</div>
<div class="n" style="left:34.5px;top:551.6px;">10</div>
<div class="n" style="left:34.5px;top:646.4px;">0</div>
<div class="n m" style="left:34.5px;top:741.1px;">−10</div>
<div class="n m" style="left:34.5px;top:835.9px;">−20</div>
<div class="n m" style="left:100.5px;top:774.5px;">−10</div>
<div class="n" style="left:125.3px;top:705.5px;">0</div>
<div class="n" style="left:159.2px;top:645.7px;">10</div>
<div class="n" style="left:201.5px;top:594.2px;">20</div>
<div class="n" style="left:250.8px;top:549.9px;">30</div>
<div class="n" style="left:305.9px;top:511.3px;">40</div>
<div class="n" style="left:365.5px;top:477.3px;">50</div>
<div class="n" style="left:428.8px;top:446.9px;">60</div>
<div class="n" style="left:495.1px;top:419.5px;">70</div>
<div class="n" style="left:563.7px;top:394.5px;">80</div>
<div class="n" style="left:634.4px;top:371.5px;">90</div>
<div class="n" style="left:706.7px;top:350.1px;">100</div>
<div class="n" style="left:780.3px;top:330.1px;">110</div>
<div class="n" style="left:855.2px;top:311.4px;">120</div>
<div class="n" style="left:931.1px;top:293.6px;">130</div>
<div class="n" style="left:1007.9px;top:276.8px;">140</div>
<div class="n w" style="left:362.8px;top:68.7px;width:34px">10<span class="p">%</span></div>
<div class="n w" style="left:635.7px;top:66px;width:34px">20<span class="p">%</span></div>
<div class="n w" style="left:895.7px;top:64.6px;width:34px">30<span class="p">%</span></div>
<div class="n w" style="left:1074.8px;top:77.1px;width:34px">40<span class="p">%</span></div>
<div class="n w" style="left:1074.8px;top:116.7px;width:34px">50<span class="p">%</span></div>
<div class="n w" style="left:1074.8px;top:158.3px;width:34px">60<span class="p">%</span></div>
<div class="n w" style="left:1074.8px;top:189px;width:34px">70<span class="p">%</span></div>
<div class="n w" style="left:1074.8px;top:220.4px;width:34px">80<span class="p">%</span></div>
<div class="n w" style="left:1074.8px;top:240.5px;width:34px">90<span class="p">%</span></div>
<div class="n w" style="left:1074.8px;top:261px;width:36.5px">100<span class="p">%</span></div>
<div class="c" style="left:1053.5px;top:24.5px">含湿量<span class="l">(g/kg干)</span></div>
<div class="c" style="left:1007px;top:301px">焓<span class="l">(kJ/kg</span>干<span class="l">)</span></div>
<div class="c" style="left:12px;top:382px;width:18px;line-height:18.5px;white-space:normal;text-align:center">温<br>度</div>
<div class="c" style="left:12px;top:417px;width:18px;line-height:20px;white-space:normal;text-align:center;font-size:17px">︵<br>℃<br>︶</div>
<div id="gb"></div>
<div id="gbt">查询</div>
<div id="dlg">
<div id="tb"><div id="tt">查询结果</div><div id="cx">×</div></div>
<div id="pn"></div>
<div class="fl" style="left:12px;top:62.0px">干球温度<span class="l">(</span>℃<span class="l">)</span></div>
<div class="fv" style="left:120px;top:63.5px">20</div>
<div class="fl" style="left:228px;top:62.0px">含湿量<span class="l">(g/kg</span>干<span class="l">)</span></div>
<div class="fv" style="left:360px;top:63.5px">14.337</div>
<div class="fl" style="left:12px;top:97.9px">湿球温度<span class="l">(</span>℃<span class="l">)</span></div>
<div class="fv" style="left:120px;top:99.4px">19.732</div>
<div class="fl" style="left:228px;top:97.9px">焓<span class="l">(kJ/kg</span>干<span class="l">)</span></div>
<div class="fv" style="left:360px;top:99.4px">56.587</div>
<div class="fl" style="left:12px;top:133.8px">露点温度<span class="l">(</span>℃<span class="l">)</span></div>
<div class="fv" style="left:120px;top:135.3px">19.624</div>
<div class="fl" style="left:228px;top:133.8px">比容<span class="l">(m3/kg</span>干<span class="l">)</span></div>
<div class="fv" style="left:360px;top:135.3px">.85</div>
<div class="fl" style="left:12px;top:169.7px">相对湿度<span class="l">(%)</span></div>
<div class="fv" style="left:120px;top:171.2px">97.62</div>
<div class="fl" style="left:228px;top:169.7px">水蒸气分压<span class="l">(Pa)</span></div>
<div class="fv" style="left:360px;top:171.2px">2282.9</div>
<div class="bt f" style="top:51.0px">描点<i></i></div>
<div class="bt" style="top:99.3px">清除</div>
<div class="bt" style="top:147.6px">关闭</div>
</div>
</body>
</html>
